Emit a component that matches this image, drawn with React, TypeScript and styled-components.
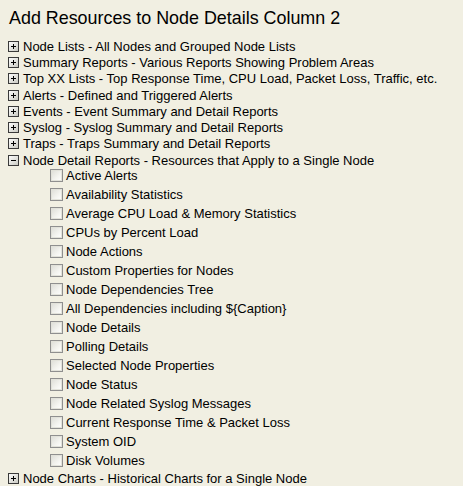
import React from 'react'
import styled, { createGlobalStyle } from 'styled-components';

const groups = [
  'Node Lists - All Nodes and Grouped Node Lists',
  'Summary Reports - Various Reports Showing Problem Areas',
  'Top XX Lists - Top Response Time, CPU Load, Packet Loss, Traffic, etc.',
  'Alerts - Defined and Triggered Alerts',
  'Events - Event Summary and Detail Reports',
  'Syslog - Syslog Summary and Detail Reports',
  'Traps - Traps Summary and Detail Reports',
]

const nodeDetailItems = [
  'Active Alerts',
  'Availability Statistics',
  'Average CPU Load & Memory Statistics',
  'CPUs by Percent Load',
  'Node Actions',
  'Custom Properties for Nodes',
  'Node Dependencies Tree',
  'All Dependencies including ${Caption}',
  'Node Details',
  'Polling Details',
  'Selected Node Properties',
  'Node Status',
  'Node Related Syslog Messages',
  'Current Response Time & Packet Loss',
  'System OID',
  'Disk Volumes',
]

const ToggleIcon = ({ open }: { open?: boolean }) => (
  <Toggle>
    <svg width="11" height="11" viewBox="0 0 11 11">
      <defs>
        <linearGradient id={open ? 'tgo' : 'tgc'} x1="0" y1="0" x2="1" y2="1">
          <stop offset="0" stopColor="#ffffff" />
          <stop offset="1" stopColor="#c8c8c0" />
        </linearGradient>
      </defs>
      <rect x="0.5" y="0.5" width="10" height="10" fill={`url(#${open ? 'tgo' : 'tgc'})`} stroke="#3a3a3a" />
      <rect x="3" y="5" width="5" height="1" fill="#000" />
      {!open && <rect x="5" y="3" width="1" height="5" fill="#000" />}
    </svg>
  </Toggle>
)

const App = () => {
  return (
    <>
      <GlobalStyle />
      <Page>
        <Title>Add Resources to Node Details Column 2</Title>
        <Tree>
          {groups.map((g) => (
            <GroupRow key={g}>
              <ToggleIcon />
              <span>{g}</span>
            </GroupRow>
          ))}
          <GroupRow>
            <ToggleIcon open />
            <span>Node Detail Reports - Resources that Apply to a Single Node</span>
          </GroupRow>
          <Children>
            {nodeDetailItems.map((item) => (
              <ItemRow key={item}>
                <Check type="checkbox" />
                <span>{item}</span>
              </ItemRow>
            ))}
          </Children>
          <GroupRow>
            <ToggleIcon />
            <span>Node Charts - Historical Charts for a Single Node</span>
          </GroupRow>
        </Tree>
      </Page>
    </>
  )
}

const GlobalStyle = createGlobalStyle`
  html, body {
    margin: 0;
    padding: 0;
    background: #f1efe2;
  }
  body {
    font-family: "Liberation Sans", Arial, sans-serif;
    color: #000;
  }
`;

const Page = styled.div`
  padding: 6px 0 0 9px;
  width: 463px;
  height: 486px;
  box-sizing: border-box;
  overflow: hidden;
`;

const Title = styled.div`
  font-size: 17.9px;
  line-height: 24px;
  margin-bottom: 8px;
  color: #000;
`;

const Tree = styled.div`
  display: flex;
  flex-direction: column;
  font-size: 13px;
`;

const GroupRow = styled.div`
  display: flex;
  align-items: center;
  height: 16.3px;
  white-space: nowrap;
  color: #000;
`;

const Toggle = styled.span`
  display: inline-flex;
  width: 11px;
  height: 11px;
  margin-left: -1px;
  margin-right: 4px;
`;

const Children = styled.div`
  display: flex;
  flex-direction: column;
  padding-left: 41px;
  margin-top: -2px;
`;

const ItemRow = styled.label`
  display: flex;
  align-items: center;
  height: 19px;
  white-space: nowrap;
`;

const Check = styled.input`
  appearance: none;
  width: 13px;
  height: 13px;
  margin: 0 3px 0 0;
  border: 1px solid #8f8f8f;
  box-sizing: border-box;
  background: linear-gradient(135deg, #dcdcd6 0%, #f4f4f0 60%, #ffffff 100%);
  box-shadow: inset 0 0 0 1px #e2e2da;
`;

export default App
